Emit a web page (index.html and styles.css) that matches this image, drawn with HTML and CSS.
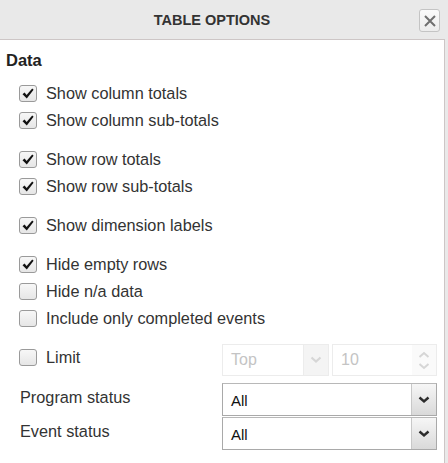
FILE: index.html
```html
<!DOCTYPE html>
<html>
<head>
<meta charset="utf-8">
<link rel="stylesheet" href="styles.css">
</head>
<body>
<div class="dialog">
  <div class="titlebar">
    <span class="title">TABLE OPTIONS</span>
    <button class="close" type="button">
      <svg width="14" height="14" viewBox="0 0 14 14"><path d="M2 2 L12 12 M12 2 L2 12" stroke="#6f6f6f" stroke-width="2" fill="none"/></svg>
    </button>
  </div>
  <div class="panel">
    <div class="heading">Data</div>

    <div class="group">
      <div class="row"><span class="cb on"></span><span class="lbl">Show column totals</span></div>
      <div class="row"><span class="cb on"></span><span class="lbl">Show column sub-totals</span></div>
    </div>
    <div class="group">
      <div class="row"><span class="cb on"></span><span class="lbl">Show row totals</span></div>
      <div class="row"><span class="cb on"></span><span class="lbl">Show row sub-totals</span></div>
    </div>
    <div class="group">
      <div class="row"><span class="cb on"></span><span class="lbl">Show dimension labels</span></div>
    </div>
    <div class="group">
      <div class="row"><span class="cb on"></span><span class="lbl">Hide empty rows</span></div>
      <div class="row"><span class="cb"></span><span class="lbl">Hide n/a data</span></div>
      <div class="row"><span class="cb"></span><span class="lbl">Include only completed events</span></div>
    </div>

    <div class="limit">
      <div class="row limit-left"><span class="cb"></span><span class="lbl">Limit</span></div>
      <div class="limit-fields">
        <div class="field dis sel-small">
          <span class="val">Top</span>
          <span class="btn dis-btn"><svg width="12" height="8" viewBox="0 0 12 8"><path d="M1.5 1.5 L6 5.5 L10.5 1.5" stroke="#d6d6d6" stroke-width="2.2" fill="none"/></svg></span>
        </div>
        <div class="field dis num">
          <span class="val">10</span>
          <span class="spin">
            <svg width="12" height="8" viewBox="0 0 12 8"><path d="M1.5 6 L6 2 L10.5 6" stroke="#d6d6d6" stroke-width="2" fill="none"/></svg>
            <svg width="12" height="8" viewBox="0 0 12 8"><path d="M1.5 2 L6 6 L10.5 2" stroke="#d6d6d6" stroke-width="2" fill="none"/></svg>
          </span>
        </div>
      </div>
    </div>

    <div class="srow first">
      <span class="slabel">Program status</span>
      <div class="field select">
        <span class="val">All</span>
        <span class="btn"><svg width="12" height="8" viewBox="0 0 12 8"><path d="M1.5 1.5 L6 5.5 L10.5 1.5" stroke="#2b2b2b" stroke-width="2.4" fill="none"/></svg></span>
      </div>
    </div>
    <div class="srow">
      <span class="slabel">Event status</span>
      <div class="field select">
        <span class="val">All</span>
        <span class="btn"><svg width="12" height="8" viewBox="0 0 12 8"><path d="M1.5 1.5 L6 5.5 L10.5 1.5" stroke="#2b2b2b" stroke-width="2.4" fill="none"/></svg></span>
      </div>
    </div>
  </div>
</div>
</body>
</html>
```
FILE: styles.css
```css
html, body {
  margin: 0;
  padding: 0;
  background: #e9e9e9;
  font-family: "Liberation Sans", Arial, sans-serif;
  color: #333;
}
.dialog {
  width: 448px;
  height: 463px;
  overflow: hidden;
  background: #e9e9e9;
}
.titlebar {
  height: 39px;
  position: relative;
  display: flex;
  align-items: center;
  justify-content: center;
  padding-right: 24px;
  box-sizing: border-box;
}
.title {
  font-weight: bold;
  font-size: 14.5px;
  color: #333;
  padding-top: 1px;
}
.close {
  position: absolute;
  right: 8px;
  top: 9px;
  width: 21px;
  height: 23px;
  padding: 0;
  border: 1px solid #c4c4c4;
  border-radius: 3px;
  background: linear-gradient(#fafafa, #ececec);
  display: flex;
  align-items: center;
  justify-content: center;
}
.panel {
  width: 445px;
  height: 424px;
  box-sizing: border-box;
  background: #fff;
  border-top: 1px solid #cdc6c6;
  border-right: 1px solid #cdc6c6;
  padding-top: 10px;
}
.heading {
  font-weight: bold;
  font-size: 16.5px;
  line-height: 20px;
  padding-left: 6px;
  color: #222;
  margin-bottom: 10px;
}
.group + .group {
  margin-top: 12px;
}
.row {
  height: 27px;
  display: flex;
  align-items: center;
  padding-left: 19px;
}
.cb {
  width: 18px;
  height: 17px;
  box-sizing: border-box;
  border: 1px solid #9a9a9a;
  border-radius: 3px;
  background: linear-gradient(#f7f7f7, #e6e6e6);
  position: relative;
  flex: none;
}
.cb.on::after {
  content: "";
  position: absolute;
  left: 2px;
  top: 2px;
  width: 12px;
  height: 11px;
  background: no-repeat center / contain url("data:image/svg+xml;utf8,<svg xmlns='http://www.w3.org/2000/svg' viewBox='0 0 12 11'><path d='M0.5 6.2 L2.6 4.6 L4.6 7.1 L10.2 0.6 L11.6 1.8 L4.8 10.5 Z' fill='%23111'/></svg>");
}
.lbl {
  margin-left: 9px;
  font-size: 16.3px;
  color: #333;
}
.limit {
  margin-top: 12px;
  display: flex;
  height: 32px;
}
.limit-left {
  width: 222px;
  box-sizing: border-box;
  align-self: flex-start;
  height: 27px;
}
.limit-fields {
  display: flex;
  gap: 3px;
}
.field {
  display: flex;
  box-sizing: border-box;
  height: 32px;
  background: #fff;
}
.field .val {
  flex: 1;
  display: flex;
  align-items: center;
  font-size: 15px;
}
.dis {
  border: 1px solid #ececec;
}
.dis .val {
  color: #c4c4c4;
  font-size: 16px;
}
.sel-small {
  width: 107px;
}
.sel-small .val {
  padding-left: 8px;
}
.num {
  width: 105px;
}
.num .val {
  padding-left: 8px;
}
.btn {
  width: 24px;
  display: flex;
  align-items: center;
  justify-content: center;
}
.dis-btn {
  background: #f4f4f4;
  border-left: 1px solid #ececec;
}
.spin {
  width: 24px;
  display: flex;
  flex-direction: column;
  align-items: center;
  justify-content: center;
  gap: 3px;
  background: #fafafa;
}
.srow {
  display: flex;
  align-items: center;
}
.srow.first {
  margin-top: 7px;
}
.srow + .srow {
  margin-top: 1px;
}
.slabel {
  width: 222px;
  padding-left: 20px;
  box-sizing: border-box;
  font-size: 16.3px;
  color: #333;
  padding-bottom: 4px;
}
.select {
  width: 215px;
  height: 33px;
  border: 1px solid #a9a9a9;
  border-top-color: #b8b8b8;
}
.select .val {
  padding-left: 8px;
  padding-top: 2px;
  color: #111;
}
.select .btn {
  border-left: 1px solid #c8c8c8;
  background: linear-gradient(#f6f6f6, #d9d9d9);
}
```
